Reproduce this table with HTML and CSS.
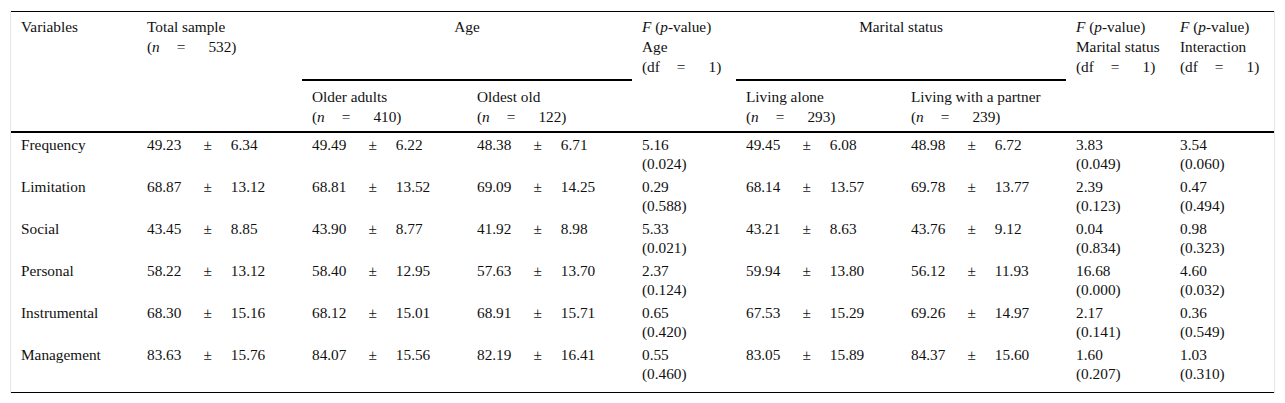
FILE: index.html
```html
<!DOCTYPE html>
<html>
<head>
<meta charset="utf-8">
<link rel="stylesheet" href="styles.css">
</head>
<body>
<div class="wrap">
<table class="tbl">
<colgroup>
<col class="c-var"><col class="c-wide"><col class="c-wide"><col class="c-wide"><col class="c-narrow"><col class="c-wide"><col class="c-wide"><col class="c-narrow"><col class="c-narrow">
</colgroup>
<thead>
<tr class="h1">
<th>Variables</th>
<th>Total sample<br>(<i>n</i><span class="eq">=</span>532)</th>
<th colspan="2" class="grp">Age</th>
<th><i>F</i> (<i>p</i>-value)<br>Age<br>(df<span class="eq">=</span>1)</th>
<th colspan="2" class="grp">Marital status</th>
<th><i>F</i> (<i>p</i>-value)<br>Marital status<br>(df<span class="eq">=</span>1)</th>
<th><i>F</i> (<i>p</i>-value)<br>Interaction<br>(df<span class="eq">=</span>1)</th>
</tr>
<tr class="h2">
<th></th>
<th></th>
<th>Older adults<br>(<i>n</i><span class="eq">=</span>410)</th>
<th>Oldest old<br>(<i>n</i><span class="eq">=</span>122)</th>
<th></th>
<th>Living alone<br>(<i>n</i><span class="eq">=</span>293)</th>
<th>Living with a partner<br>(<i>n</i><span class="eq">=</span>239)</th>
<th></th>
<th></th>
</tr>
</thead>
<tbody>
<tr><td>Frequency</td><td>49.23<span class="pm">±</span>6.34</td><td>49.49<span class="pm">±</span>6.22</td><td>48.38<span class="pm">±</span>6.71</td><td>5.16<br>(0.024)</td><td>49.45<span class="pm">±</span>6.08</td><td>48.98<span class="pm">±</span>6.72</td><td>3.83<br>(0.049)</td><td>3.54<br>(0.060)</td></tr>
<tr><td>Limitation</td><td>68.87<span class="pm">±</span>13.12</td><td>68.81<span class="pm">±</span>13.52</td><td>69.09<span class="pm">±</span>14.25</td><td>0.29<br>(0.588)</td><td>68.14<span class="pm">±</span>13.57</td><td>69.78<span class="pm">±</span>13.77</td><td>2.39<br>(0.123)</td><td>0.47<br>(0.494)</td></tr>
<tr><td>Social</td><td>43.45<span class="pm">±</span>8.85</td><td>43.90<span class="pm">±</span>8.77</td><td>41.92<span class="pm">±</span>8.98</td><td>5.33<br>(0.021)</td><td>43.21<span class="pm">±</span>8.63</td><td>43.76<span class="pm">±</span>9.12</td><td>0.04<br>(0.834)</td><td>0.98<br>(0.323)</td></tr>
<tr><td>Personal</td><td>58.22<span class="pm">±</span>13.12</td><td>58.40<span class="pm">±</span>12.95</td><td>57.63<span class="pm">±</span>13.70</td><td>2.37<br>(0.124)</td><td>59.94<span class="pm">±</span>13.80</td><td>56.12<span class="pm">±</span>11.93</td><td>16.68<br>(0.000)</td><td>4.60<br>(0.032)</td></tr>
<tr><td>Instrumental</td><td>68.30<span class="pm">±</span>15.16</td><td>68.12<span class="pm">±</span>15.01</td><td>68.91<span class="pm">±</span>15.71</td><td>0.65<br>(0.420)</td><td>67.53<span class="pm">±</span>15.29</td><td>69.26<span class="pm">±</span>14.97</td><td>2.17<br>(0.141)</td><td>0.36<br>(0.549)</td></tr>
<tr><td>Management</td><td>83.63<span class="pm">±</span>15.76</td><td>84.07<span class="pm">±</span>15.56</td><td>82.19<span class="pm">±</span>16.41</td><td>0.55<br>(0.460)</td><td>83.05<span class="pm">±</span>15.89</td><td>84.37<span class="pm">±</span>15.60</td><td>1.60<br>(0.207)</td><td>1.03<br>(0.310)</td></tr>
</tbody>
</table>
</div>
</body>
</html>
```
FILE: styles.css
```css
html, body {
  margin: 0;
  padding: 0;
  background: #fff;
}
body {
  font-family: "Liberation Serif", "Times New Roman", serif;
  font-size: 15.3px;
  color: #111;
}
.wrap {
  margin: 11px 0 0 10px;
  width: 1263px;
  border-left: 1px solid #e6e6e6;
  border-right: 1px solid #e6e6e6;
}
.tbl {
  width: 1263px;
  table-layout: fixed;
  border-collapse: collapse;
  border-top: 1px solid #000;
  border-bottom: 1px solid #000;
}
.c-var { width: 126px; }
.c-wide { width: 165px; }
.c-narrow { width: 104px; }
.tbl th, .tbl td {
  text-align: left;
  vertical-align: top;
  font-weight: normal;
  line-height: 20px;
  padding: 0 4px 0 10px;
  white-space: nowrap;
}
.tbl thead {
  border-bottom: 2px solid #000;
}
.h1 th {
  padding-top: 5px;
  padding-bottom: 3px;
}
.h1 th.grp {
  text-align: center;
  padding-left: 0;
  padding-right: 0;
  border-bottom: 2px solid #000;
}
.h2 th {
  padding-top: 6px;
  padding-bottom: 4px;
}
.tbl td {
  line-height: 19px;
  padding-top: 2px;
  padding-bottom: 2px;
}
.tbl tbody tr:last-child td {
  padding-bottom: 9px;
}
.eq {
  margin: 0 23px 0 17px;
}
.pm {
  margin: 0 19px 0 22px;
}
```
